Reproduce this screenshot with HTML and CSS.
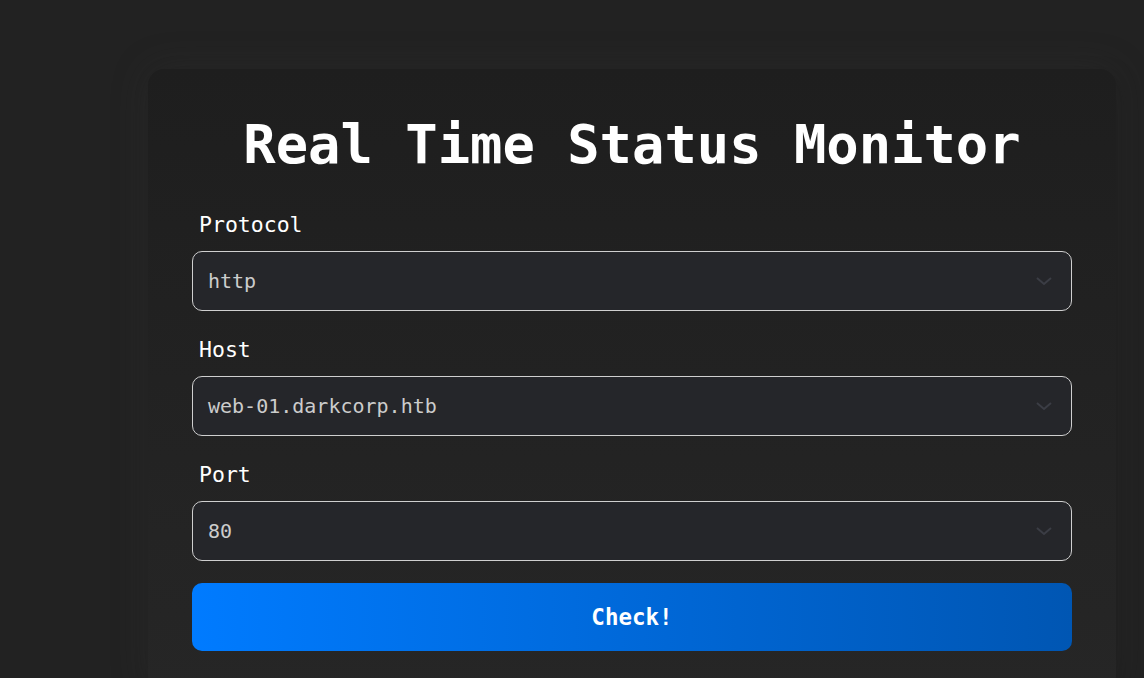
FILE: index.html
```html
<!DOCTYPE html>
<html lang="en">
<head>
<meta charset="utf-8">
<title>Real Time Status Monitor</title>
<link rel="stylesheet" href="styles.css">
</head>
<body>
<main class="page">
  <section class="card">
    <h1 class="title">Real Time Status Monitor</h1>
    <form class="form">
      <div class="field">
        <label class="label">Protocol</label>
        <div class="select">
          <span class="value">http</span>
          <svg class="chev" width="18" height="10" viewBox="0 0 18 10"><path d="M2 2 L9 8 L16 2" fill="none" stroke="#3b3d45" stroke-width="2"/></svg>
        </div>
      </div>
      <div class="field">
        <label class="label">Host</label>
        <div class="select">
          <span class="value">web-01.darkcorp.htb</span>
          <svg class="chev" width="18" height="10" viewBox="0 0 18 10"><path d="M2 2 L9 8 L16 2" fill="none" stroke="#3b3d45" stroke-width="2"/></svg>
        </div>
      </div>
      <div class="field field-last">
        <label class="label">Port</label>
        <div class="select">
          <span class="value">80</span>
          <svg class="chev" width="18" height="10" viewBox="0 0 18 10"><path d="M2 2 L9 8 L16 2" fill="none" stroke="#3b3d45" stroke-width="2"/></svg>
        </div>
      </div>
      <button type="button" class="btn">Check!</button>
    </form>
  </section>
</main>
</body>
</html>
```
FILE: styles.css
```css
html, body {
  margin: 0;
  padding: 0;
  height: 100%;
  overflow: hidden;
}
body {
  background: #222222;
  font-family: "DejaVu Sans Mono", monospace;
  color: #ffffff;
}
.page {
  display: flex;
  justify-content: flex-start;
  padding: 69px 0 0 148px;
}
.card {
  width: 968px;
  flex: none;
  box-sizing: border-box;
  padding: 40px 44px 40px;
  border-radius: 16px;
  background: linear-gradient(180deg, #1e1e1e 0%, #222222 50%, #262626 100%);
  box-shadow: 0 0 36px rgba(58, 58, 58, 0.3), 6px 6px 20px rgba(0,0,0,0.18);
}
.title {
  margin: 0 0 31px;
  text-align: center;
  font-size: 53.8px;
  line-height: 72px;
  font-weight: bold;
  color: #ffffff;
}
.form {
  display: flex;
  flex-direction: column;
}
.field {
  display: flex;
  flex-direction: column;
  margin-bottom: 26px;
}
.field-last {
  margin-bottom: 22px;
}
.label {
  padding-left: 7px;
  font-size: 21.5px;
  line-height: 26px;
  margin-bottom: 13px;
  color: #ffffff;
}
.select {
  height: 60px;
  box-sizing: border-box;
  border: 1px solid #cfcfcf;
  border-radius: 10px;
  background: #25262a;
  display: flex;
  align-items: center;
  justify-content: space-between;
  padding: 0 18px 0 15px;
}
.value {
  font-size: 20px;
  color: #cccccc;
}
.chev {
  display: block;
}
.btn {
  margin-top: 0;
  height: 68px;
  border: none;
  border-radius: 10px;
  background: linear-gradient(90deg, #007bff 0%, #0056b3 100%);
  color: #ffffff;
  font-family: "DejaVu Sans Mono", monospace;
  font-size: 22.5px;
  font-weight: bold;
}
```
